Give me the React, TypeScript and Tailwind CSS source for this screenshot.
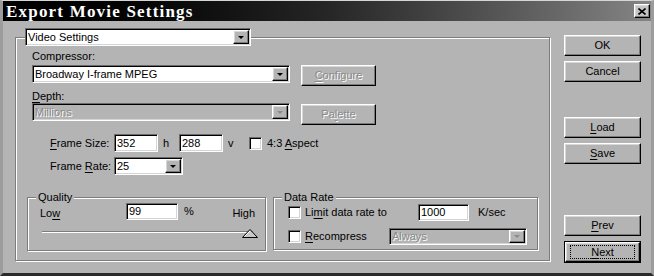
import React from 'react';

const FONT = "font-['Liberation_Sans',Arial,sans-serif]";
const sunken = 'border border-t-[#6b6b6b] border-l-[#6b6b6b] border-b-white border-r-white shadow-[inset_1px_1px_0_#000,inset_-1px_-1px_0_#d4d4d4]';
const raised = 'border border-t-white border-l-white border-b-black border-r-black shadow-[inset_-1px_-1px_0_#7a7a7a,inset_1px_1px_0_#d8d8d8]';
const etched = 'border border-[#7c7c7c] shadow-[inset_1px_1px_0_#fff,1px_1px_0_#fff]';
const greyed = 'text-[#8a8a8a] [text-shadow:1px_1px_0_#fff]';

// underlined accelerator letter
const U = ({ children }: { children: React.ReactNode }) => <span className="underline underline-offset-[2px]">{children}</span>;

const Arrow = ({ disabled }: { disabled?: boolean }) => (
    <div className={`w-[16px] h-full shrink-0 flex items-center justify-center bg-[#b4b4b4] ${raised}`}>
        <div className={`w-0 h-0 border-l-[3px] border-r-[3px] border-t-[3px] border-l-transparent border-r-transparent ${disabled ? 'border-t-[#8a8a8a]' : 'border-t-black'}`} />
    </div>
);

interface SelectProps {
    value: string;
    className: string;
    disabled?: boolean;
}

const Select: React.FC<SelectProps> = ({ value, className, disabled }) => (
    <div className={`flex items-stretch ${sunken} ${disabled ? 'bg-[#b4b4b4]' : 'bg-white'} ${className}`}>
        <div className={`flex-1 flex items-center pl-[2px] text-[11px] ${disabled ? greyed : 'text-black'}`}>{value}</div>
        <div className="p-[1px] h-full">
            <Arrow disabled={disabled} />
        </div>
    </div>
);

const Field = ({ value, className }: { value: string; className: string }) => (
    <div className={`flex items-center pl-[2px] bg-white text-[11px] text-black ${sunken} ${className}`}>{value}</div>
);

const Check = () => <div className={`w-[13px] h-[13px] shrink-0 bg-white ${sunken}`} />;

interface BtnProps {
    children: React.ReactNode;
    disabled?: boolean;
    className?: string;
}

const Btn: React.FC<BtnProps> = ({ children, disabled, className = '' }) => (
    <div className={`flex items-center justify-center bg-[#b4b4b4] text-[11px] ${raised} ${disabled ? greyed : 'text-black'} ${className}`}>
        {children}
    </div>
);

const Group = ({ title, className, children }: { title: string; className: string; children: React.ReactNode }) => (
    <div className={`relative flex flex-col ${etched} ${className}`}>
        <div className="absolute top-[-8px] left-[8px] px-[2px] bg-[#b4b4b4] text-[11px] leading-[14px] text-black">{title}</div>
        {children}
    </div>
);

export default function App() {
    return (
        <div className={`w-[654px] h-[276px] overflow-hidden flex flex-col bg-[#b4b4b4] border-t border-l-[3px] border-r-[3px] border-b-[3px] border-t-[#d6d6d6] border-l-[#9c9c9c] border-r-[#9c9c9c] border-b-[#2a2a2a] ${FONT}`}>
            {/* title bar */}
            <div className="h-[20px] shrink-0 flex items-center justify-between bg-gradient-to-r from-black via-[#262626] to-[#858585]">
                <div className="pl-[3px] text-white font-bold text-[17px] tracking-[1.2px] leading-none font-['Liberation_Serif','Times_New_Roman',serif]">
                    Export Movie Settings
                </div>
                <div className={`mr-[1px] w-[16px] h-[14px] flex items-center justify-center bg-[#c4c4c4] ${raised}`}>
                    <svg width="8" height="7" viewBox="0 0 8 7">
                        <path d="M0.5 0.5 L7.5 6.5 M7.5 0.5 L0.5 6.5" stroke="#000" strokeWidth="1.6" />
                    </svg>
                </div>
            </div>

            <div className="flex items-start">
                {/* main settings panel */}
                <div className={`relative ml-[12px] mt-[16px] w-[535px] h-[224px] flex flex-col ${etched}`}>
                    <Select value="Video Settings" className="absolute top-[-10px] left-[9px] w-[226px] h-[18px]" />

                    <div className="ml-[16px] mt-[11px] h-[14px] leading-[14px] text-[11px] text-black">Compressor:</div>
                    <div className="ml-[16px] mt-[2px] flex items-start">
                        <Select value="Broadway I-frame MPEG" className="w-[258px] h-[18px]" />
                        <Btn disabled className="ml-[11px] w-[75px] h-[21px]">
                            <U>C</U>onfigure
                        </Btn>
                    </div>

                    <div className="ml-[16px] mt-[3px] h-[14px] leading-[14px] text-[11px] text-black">
                        <U>D</U>epth:
                    </div>
                    <div className="ml-[16px] flex items-start">
                        <Select value="Millions" disabled className="w-[258px] h-[18px]" />
                        <Btn disabled className="ml-[11px] mt-[1px] w-[75px] h-[21px]">
                            Pa<U>l</U>ette
                        </Btn>
                    </div>

                    <div className="ml-[34px] mt-[9px] h-[18px] flex items-center text-[11px] text-black">
                        <span className="w-[64px]">
                            <U>F</U>rame Size:
                        </span>
                        <Field value="352" className="w-[44px] h-[18px]" />
                        <span className="w-[21px] pl-[5px]">h</span>
                        <Field value="288" className="w-[44px] h-[18px]" />
                        <span className="w-[26px] pl-[5px]">v</span>
                        <Check />
                        <span className="ml-[5px]">
                            4:3 <U>A</U>spect
                        </span>
                    </div>

                    <div className="ml-[34px] mt-[5px] h-[18px] flex items-center text-[11px] text-black">
                        <span className="w-[64px]">
                            Frame <U>R</U>ate:
                        </span>
                        <Select value="25" className="w-[69px] h-[18px]" />
                    </div>

                    <div className="ml-[11px] mt-[22px] flex items-start">
                        <Group title="Quality" className="w-[239px] h-[54px]">
                            <div className="mt-[5px] h-[17px] flex items-center text-[11px] text-black">
                                <span className="ml-[12px] w-[86px] mt-[4px]">
                                    Lo<U>w</U>
                                </span>
                                <Field value="99" className="w-[52px] h-[17px]" />
                                <span className="ml-[6px] self-start">%</span>
                                <span className="ml-auto mr-[10px] mt-[4px]">High</span>
                            </div>
                            <div className="relative ml-[14px] mt-[10px] w-[216px] h-[9px]">
                                <div className="mt-[1px] w-[211px] h-[2px] border-t border-t-[#7c7c7c] border-b border-b-white" />
                                <svg className="absolute right-0 top-[-1px]" width="16" height="9" viewBox="0 0 16 9">
                                    <polygon points="8,0.5 15.5,8.5 0.5,8.5" fill="#c8c8c8" stroke="#000" strokeWidth="1" />
                                    <path d="M8 2 L2.5 7.5" stroke="#fff" strokeWidth="1" />
                                </svg>
                            </div>
                        </Group>

                        <Group title="Data Rate" className="ml-[7px] w-[265px] h-[53px]">
                            <div className="mt-[6px] h-[17px] flex items-center text-[11px] text-black">
                                <div className="ml-[14px]">
                                    <Check />
                                </div>
                                <span className="ml-[4px] w-[113px]">
                                    Li<U>m</U>it data rate to
                                </span>
                                <Field value="1000" className="w-[51px] h-[17px]" />
                                <span className="ml-[9px]">K/sec</span>
                            </div>
                            <div className="mt-[7px] h-[17px] flex items-center text-[11px] text-black">
                                <div className="ml-[14px]">
                                    <Check />
                                </div>
                                <span className="ml-[4px] w-[84px]">
                                    <U>R</U>ecompress
                                </span>
                                <Select value="Always" disabled className="w-[138px] h-[17px]" />
                            </div>
                        </Group>
                    </div>
                </div>

                {/* buttons */}
                <div className="ml-[14px] mt-[14px] flex flex-col">
                    <Btn className="w-[77px] h-[21px]">OK</Btn>
                    <Btn className="mt-[5px] w-[77px] h-[21px]">Cancel</Btn>
                    <Btn className="mt-[35px] w-[77px] h-[21px]">
                        <U>L</U>oad
                    </Btn>
                    <Btn className="mt-[5px] w-[77px] h-[21px]">
                        <U>S</U>ave
                    </Btn>
                    <Btn className="mt-[51px] w-[77px] h-[21px]">
                        <U>P</U>rev
                    </Btn>
                    <div className="mt-[5px] w-[77px] h-[22px] border border-black">
                        <div className={`w-full h-full flex items-center justify-center bg-[#b4b4b4] text-[11px] text-black ${raised}`}>
                            <div className="w-[65px] h-[14px] flex items-center justify-center border border-dotted border-black">
                                <U>N</U>ext
                            </div>
                        </div>
                    </div>
                </div>
            </div>
        </div>
    );
}
